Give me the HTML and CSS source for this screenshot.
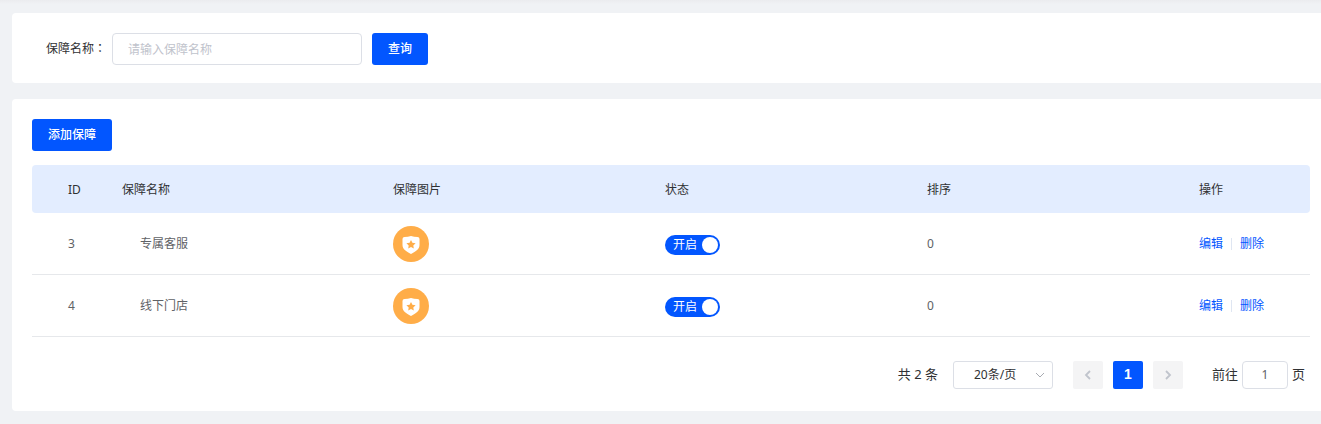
FILE: index.html
```html
<!DOCTYPE html>
<html lang="zh-CN">

<head>
    <meta charset="UTF-8">
    <meta name="viewport" content="width=device-width, initial-scale=1.0">
    <title>保障服务</title>
    <link rel="stylesheet" href="styles.css">
</head>

<body>
    <svg class="symbols">
        <symbol id="shield" viewBox="0 0 36 36">
            <circle cx="18" cy="18" r="18" fill="#ffad48" />
            <path d="M11.500 11Q15 11 18 10Q21 11 24.500 11Q26.500 11 26.500 13V19C26.500 23 23 25.500 18 28C13 25.500 9.500 23 9.500 19V13Q9.500 11 11.500 11Z" fill="#fff" />
            <path d="M18 13.900L19.400 16.800L22.600 17.200L20.300 19.400L20.800 22.600L18 21.100L15.200 22.600L15.700 19.400L13.400 17.200L16.600 16.800Z" fill="#ffad48" />
        </symbol>
    </svg>
    <div class="card search">
        <label for="name">保障名称<span class="colon" lang="zh-TW">：</span></label>
        <input id="name" type="text" placeholder="请输入保障名称">
        <button class="btn">查询</button>
    </div>
    <div class="card content">
        <button class="btn">添加保障</button>
        <div class="table">
            <div class="row head">
                <span>ID</span>
                <span>保障名称</span>
                <span>保障图片</span>
                <span>状态</span>
                <span>排序</span>
                <span>操作</span>
            </div>
            <div class="row">
                <span>3</span>
                <span class="name">专属客服</span>
                <span><svg class="icon"><use href="#shield" /></svg></span>
                <span><i class="switch">开启</i></span>
                <span>0</span>
                <span class="action"><a href="javascript:;">编辑</a><a href="javascript:;">删除</a></span>
            </div>
            <div class="row">
                <span>4</span>
                <span class="name">线下门店</span>
                <span><svg class="icon"><use href="#shield" /></svg></span>
                <span><i class="switch">开启</i></span>
                <span>0</span>
                <span class="action"><a href="javascript:;">编辑</a><a href="javascript:;">删除</a></span>
            </div>
        </div>
        <div class="pagination">
            <span class="total">共 2 条</span>
            <div class="size">
                <span>20条/页</span>
                <svg width="10" height="10" viewBox="0 0 10 10"><path d="M1 3L5 7L9 3" /></svg>
            </div>
            <a class="page arrow" href="javascript:;"><svg width="10" height="10" viewBox="0 0 10 10"><path d="M7 1L3 5L7 9" /></svg></a>
            <a class="page active" href="javascript:;">1</a>
            <a class="page arrow" href="javascript:;"><svg width="10" height="10" viewBox="0 0 10 10"><path d="M3 1L7 5L3 9" /></svg></a>
            <span class="jump">前往</span>
            <input type="text" value="1">
            <span>页</span>
        </div>
    </div>
</body>

</html>
```
FILE: styles.css
```css
* {
    margin: 0;
    padding: 0;
    box-sizing: border-box;
    text-decoration: none;
}

body {
    height: 424px;
    padding: 13px 0 0 12px;
    background: linear-gradient(#ebecef, #f0f2f5 4px);
    font: 12px/20px "Noto Sans", "Noto Sans CJK SC", sans-serif;
    color: #303133;
    overflow: hidden;
}

input,
button {
    font: inherit;
}

input {
    border: 1px solid #dcdfe6;
    border-radius: 4px;
    color: #606266;
    background-color: #fff;
}

input::placeholder {
    color: #bfc3cc;
}

.symbols {
    display: none;
}

.card {
    background-color: #fff;
    border-radius: 4px 0 0 4px;
}

.search {
    display: flex;
    height: 70px;
    padding: 20px 34px;
    margin-bottom: 16px;
}

.search label {
    width: 66px;
    line-height: 29px;
    white-space: nowrap;
}

.colon {
    font-family: "Noto Sans CJK TC", sans-serif;
}

.search input {
    width: 250px;
    height: 32px;
    padding: 0 15px;
    margin-right: 10px;
}

.btn {
    display: block;
    height: 32px;
    padding: 0 16px;
    border: none;
    border-radius: 3px;
    color: #fff;
    background-color: #0256ff;
    font-weight: 500;
}

.content {
    height: 312px;
    padding: 20px 11px 0 20px;
}

.table {
    margin-top: 14px;
}

.row {
    display: grid;
    grid-template-columns: 80px 271px 272px 262px 272px 1fr;
    align-items: center;
    height: 62px;
    border-bottom: 1px solid #e6e8eb;
    color: #606266;
}

.row > span {
    display: flex;
    align-items: center;
    padding-left: 10px;
}

.row > span:first-child {
    padding-left: 36px;
}

.row > .name {
    padding-left: 28px;
}

.head {
    height: 48px;
    padding-top: 2px;
    border: none;
    border-radius: 4px;
    background-color: #e3edff;
    color: #303133;
}

.icon {
    width: 36px;
    height: 36px;
}

.switch {
    display: flex;
    align-items: center;
    justify-content: space-between;
    width: 55px;
    height: 20px;
    padding: 0 2px 0 8px;
    margin-top: 3px;
    border-radius: 10px;
    background-color: #0256ff;
    color: #fff;
    font-style: normal;
}

.switch::after {
    content: "";
    width: 16px;
    height: 16px;
    border-radius: 50%;
    background-color: #fff;
}

.action a {
    color: #0256ff;
}

.action a + a {
    display: flex;
    align-items: center;
}

.action a + a::before {
    content: "";
    width: 1px;
    height: 12px;
    margin: 0 8px;
    background-color: #dfe6f2;
}

.pagination {
    display: flex;
    justify-content: flex-end;
    align-items: center;
    height: 28px;
    margin-top: 24px;
    padding-right: 5px;
    font-size: 13px;
}

.pagination > span {
    padding-bottom: 2px;
}

.pagination svg {
    fill: none;
    stroke: #a8abb2;
}

.size {
    display: flex;
    align-items: center;
    justify-content: space-between;
    width: 100px;
    height: 28px;
    padding: 0 7px 0 20px;
    margin: 0 20px 0 15px;
    border: 1px solid #dcdfe6;
    border-radius: 3px;
    font-size: 12px;
}

.page {
    display: flex;
    align-items: center;
    justify-content: center;
    width: 30px;
    height: 28px;
    margin-right: 10px;
    border-radius: 2px;
    background-color: #f4f4f5;
}

.page.arrow svg {
    stroke: #c0c4cc;
    stroke-width: 1.8;
}

.page.active {
    padding-bottom: 2px;
    color: #fff;
    background-color: #0256ff;
    font: 700 14px "Liberation Sans", sans-serif;
}

.jump {
    margin-left: 19px;
}

.pagination input {
    width: 46px;
    height: 28px;
    padding-bottom: 1px;
    margin: 0 4px;
    text-align: center;
    font-size: 12px;
}
```
